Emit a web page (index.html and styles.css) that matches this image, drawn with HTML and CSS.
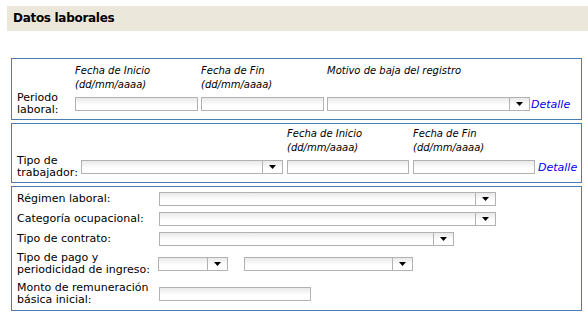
FILE: index.html
```html
<!DOCTYPE html>
<html lang="es">
<head>
  <meta charset="UTF-8" />
  <title>Datos laborales</title>
  <link rel="stylesheet" href="styles.css">
</head>
<body>
<div class="title">Datos laborales</div>
<div class="form">
  <div class="box box-period">
    <div class="grid period">
      <div></div>
      <div class="hint">Fecha de Inicio<br>(dd/mm/aaaa)</div>
      <div class="hint">Fecha de Fin<br>(dd/mm/aaaa)</div>
      <div class="hint">Motivo de baja del registro</div>
      <div></div>
      <div class="label">Periodo<br>laboral:</div>
      <input type="text" class="field">
      <input type="text" class="field">
      <div class="select"><select></select><span class="btn"></span></div>
      <a href="#" class="detail">Detalle</a>
    </div>
  </div>
  <div class="box box-worker">
    <div class="grid worker">
      <div></div>
      <div></div>
      <div class="hint">Fecha de Inicio<br>(dd/mm/aaaa)</div>
      <div class="hint">Fecha de Fin<br>(dd/mm/aaaa)</div>
      <div></div>
      <div class="label nowrap">Tipo de<br>trabajador:</div>
      <div class="select"><select></select><span class="btn"></span></div>
      <input type="text" class="field">
      <input type="text" class="field">
      <a href="#" class="detail">Detalle</a>
    </div>
  </div>
  <div class="box box-general">
    <div class="general">
      <div class="label">Régimen laboral:</div>
      <div class="select w-long"><select></select><span class="btn"></span></div>
      <div class="label">Categoría ocupacional:</div>
      <div class="select w-long"><select></select><span class="btn"></span></div>
      <div class="label">Tipo de contrato:</div>
      <div class="select w-mid"><select></select><span class="btn"></span></div>
      <div class="label">Tipo de pago y<br>periodicidad de ingreso:</div>
      <div class="pair">
        <div class="select w-short"><select></select><span class="btn"></span></div>
        <div class="select w-period"><select></select><span class="btn"></span></div>
      </div>
      <div class="label">Monto de remuneración<br>básica inicial:</div>
      <input type="text" class="field w-amount">
    </div>
  </div>
</div>
</body>
</html>
```

FILE: styles.css
```css
body {
  margin: 0;
  font-family: "DejaVu Sans", Verdana, sans-serif;
  font-size: 11px;
  color: #000;
  background-color: #fff;
}
.title {
  margin: 6px 0 0 7px;
  height: 25px;
  line-height: 25px;
  padding-left: 6px;
  background-color: #ebe8db;
  font-weight: bold;
  font-size: 12px;
  letter-spacing: -0.3px;
}
.form {
  margin: 27px 0 0 11px;
  width: 571px;
  display: flex;
  flex-direction: column;
  gap: 3px;
}
.box {
  border: 1px solid #4a7db3;
  padding: 5px 5px 3px 5px;
}
.box-worker {
  padding-top: 3px;
}
.box-general {
  padding: 2px 5px 1px 5px;
}
.grid {
  display: grid;
  grid-template-rows: 28px 24px;
  align-items: center;
}
.period {
  grid-template-columns: 55px 123px 123px 203px auto;
  column-gap: 3px;
}
.worker {
  grid-template-columns: 60px 202px 122px 122px auto;
  column-gap: 4px;
}
.hint {
  align-self: start;
  font-style: italic;
  font-size: 10px;
  line-height: 14px;
  white-space: nowrap;
}
.label {
  line-height: 12px;
  white-space: nowrap;
}
.field {
  box-sizing: border-box;
  height: 14px;
  width: 100%;
  margin: 0;
  padding: 0;
  border: 1px solid #b2b2b2;
  background: linear-gradient(#e9e9e9, #fff 60%);
}
.select {
  box-sizing: border-box;
  display: flex;
  height: 14px;
  border: 1px solid #b2b2b2;
  background: linear-gradient(#e9e9e9, #fff 60%);
}
.select select {
  flex: 1;
  min-width: 0;
  height: 12px;
  margin: 0;
  padding: 0;
  border: none;
  appearance: none;
  background: transparent;
}
.btn {
  width: 19px;
  border-left: 1px solid #b2b2b2;
  display: flex;
  align-items: center;
  justify-content: center;
}
.btn::before {
  content: "";
  width: 7px;
  height: 4px;
  background-color: #000;
  clip-path: polygon(0 0, 100% 0, 50% 100%);
}
.detail {
  margin-left: -2px;
  font-style: italic;
  color: #0000f0;
  text-decoration: none;
}
.worker .detail {
  margin-left: -1px;
}
.general {
  display: grid;
  grid-template-columns: 142px auto;
  grid-template-rows: 20px 20px 20px 30px 30px;
  align-items: center;
}
.w-long {
  width: 337px;
}
.w-mid {
  width: 295px;
}
.pair {
  display: flex;
  gap: 16px;
  margin-left: -1px;
}
.w-short {
  width: 70px;
}
.w-period {
  width: 169px;
}
.w-amount {
  width: 152px;
}
```
